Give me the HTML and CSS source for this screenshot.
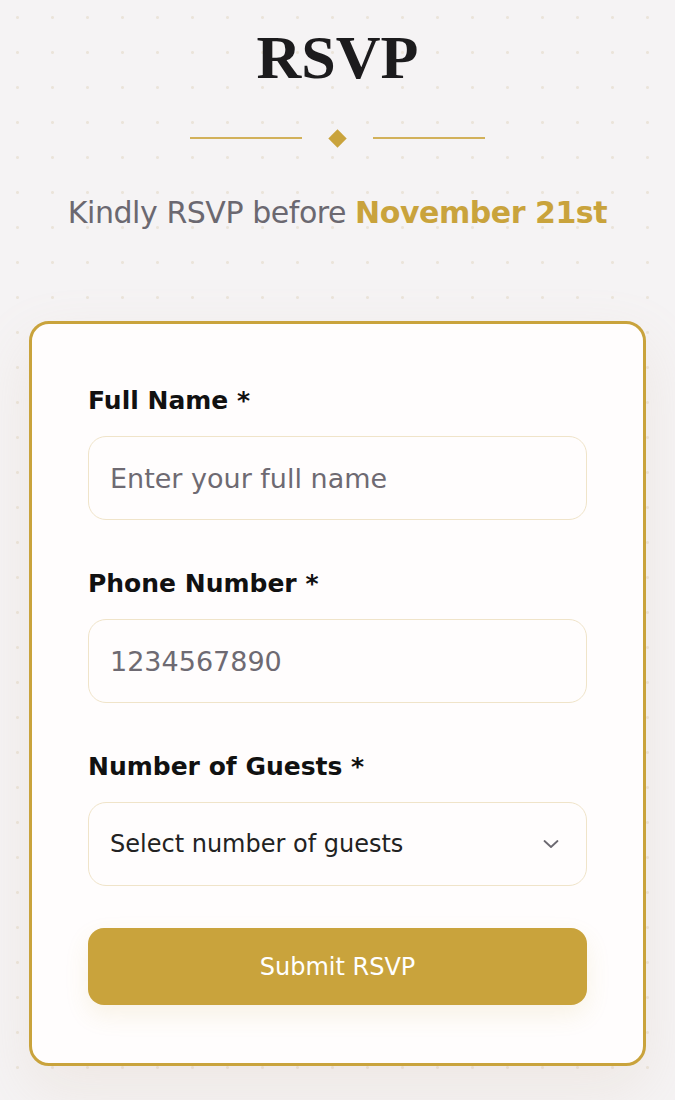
FILE: index.html
```html
<!DOCTYPE html>
<html lang="en">
<head>
    <meta charset="UTF-8">
    <title>RSVP</title>
    <meta name="viewport" content="width=device-width, initial-scale=1.0">
    <link rel="stylesheet" href="styles.css">
</head>
<body>
<div class="page">
    <h1 class="title">RSVP</h1>
    <div class="divider">
        <span class="line"></span>
        <span class="diamond"></span>
        <span class="line"></span>
    </div>
    <p class="deadline">Kindly RSVP before <strong>November 21st</strong></p>

    <form class="card">
        <div class="field">
            <label for="name">Full Name *</label>
            <input id="name" type="text" placeholder="Enter your full name">
        </div>
        <div class="field">
            <label for="phone">Phone Number *</label>
            <input id="phone" type="tel" placeholder="1234567890">
        </div>
        <div class="field">
            <label for="guests">Number of Guests *</label>
            <div class="selectWrap">
                <select id="guests">
                    <option>Select number of guests</option>
                    <option>1</option>
                    <option>2</option>
                    <option>3</option>
                </select>
                <svg class="chevron" width="18" height="18" viewBox="0 0 18 18">
                    <path d="M2.5 6 L9 12 L15.5 6" fill="none" stroke="#6b6870" stroke-width="1.8" stroke-linecap="round" stroke-linejoin="round"/>
                </svg>
            </div>
        </div>
        <button type="button" class="submit">Submit RSVP</button>
    </form>
</div>
</body>
</html>
```

FILE: styles.css
```css
body {
    margin: 0;
    background-color: #f5f3f4;
    background-image: radial-gradient(circle, #ebe4da 1.2px, transparent 1.7px);
    background-size: 35px 35px;
    font-family: "DejaVu Sans", "Open Sans", sans-serif;
    color: #111;
}

.page {
    width: 675px;
    height: 1100px;
    box-sizing: border-box;
    padding: 20px 29px 0;
    overflow: hidden;
}

.title {
    margin: 0;
    text-align: center;
    font-family: "Liberation Serif", "DejaVu Serif", serif;
    font-weight: bold;
    font-size: 62px;
    line-height: 74px;
    color: #1c1b1d;
}

.divider {
    display: flex;
    justify-content: center;
    align-items: center;
    gap: 29px;
    margin-top: 34px;
    height: 20px;
}

.divider .line {
    width: 112px;
    height: 2px;
    background: #d2b15a;
}

.divider .diamond {
    width: 13px;
    height: 13px;
    background: #c9a33c;
    transform: rotate(45deg);
}

.deadline {
    margin: 45px 0 0;
    text-align: center;
    font-size: 30px;
    line-height: 40px;
    color: #6b6870;
    letter-spacing: -0.45px;
}

.deadline strong {
    color: #c9a33c;
    font-weight: 600;
}

.card {
    display: flex;
    flex-direction: column;
    gap: 45px;
    margin-top: 88px;
    background: #fffdfd;
    border: 3px solid #c9a33c;
    border-radius: 20px;
    padding: 58px 56px 58px;
    box-shadow: 0 24px 60px rgba(205, 175, 145, 0.16);
}

.field {
    display: flex;
    flex-direction: column;
}

.field label {
    font-size: 25px;
    line-height: 38px;
    font-weight: 600;
    color: #111;
    margin-bottom: 16px;
}

.field input,
.field select {
    box-sizing: border-box;
    width: 100%;
    height: 84px;
    border: 1.5px solid #f0e4c9;
    border-radius: 18px;
    background: #fffdfd;
    font-family: inherit;
    font-size: 27px;
    padding: 0 21px;
    color: #222;
    outline: none;
}

.field input::placeholder {
    color: #6e6a72;
}

.selectWrap {
    position: relative;
}

.field select {
    -webkit-appearance: none;
    appearance: none;
    font-size: 24px;
    color: #222;
}

.chevron {
    position: absolute;
    right: 27px;
    top: 33px;
    pointer-events: none;
}

.submit {
    display: block;
    width: 100%;
    height: 77px;
    margin-top: -3px;
    border: none;
    border-radius: 16px;
    background: #c9a33c;
    color: #fff;
    font-family: inherit;
    font-size: 24px;
    font-weight: 500;
    box-shadow: 0 10px 24px rgba(201, 163, 60, 0.12);
}
```
